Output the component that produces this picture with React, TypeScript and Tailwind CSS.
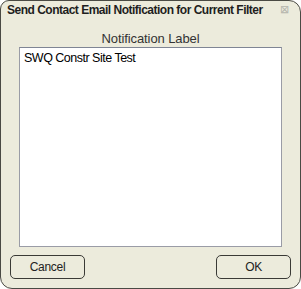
import React from 'react';

export default function App() {
    return (
        <div
            className="w-[301px] h-[289px] bg-[#ecebdc] border border-[#4a4a44] rounded-tl-[9px] rounded-tr-[12px] rounded-bl-[12px] rounded-br-[12px] flex flex-col text-[#222] overflow-hidden"
            style={{ fontFamily: '"Liberation Sans", Arial, sans-serif' }}
        >
            {/* title bar */}
            <div className="flex items-center h-[17px] pl-[6px] pr-[11px]">
                <span className="font-bold text-[12px] tracking-[-0.5px] leading-none text-[#1e1e1e] whitespace-nowrap">
                    Send Contact Email Notification for Current Filter
                </span>
                <span className="ml-auto text-[11px] leading-none text-[#b4b4ac]">⊠</span>
            </div>

            <div className="flex flex-col items-center mt-[13px]">
                <div className="text-[13px] leading-[15px] text-[#333] tracking-[-0.1px]">Notification Label</div>
                <div className="mt-[1px] w-[263px] h-[200px] bg-white border border-[#9a9ca6] border-t-[#7f8594] px-[4px] pt-[3px] text-[12.5px] leading-[14px] text-black tracking-[-0.5px]">
                    SWQ Constr Site Test
                </div>
            </div>

            <div className="flex justify-between px-[9px] mt-[8px]">
                <button className="w-[75px] h-[24px] rounded-[5px] border border-[#3a3a36] bg-[#ecebdc] text-[12px] tracking-[-0.3px] text-[#222]">
                    Cancel
                </button>
                <button className="w-[75px] h-[24px] rounded-[5px] border border-[#3a3a36] bg-[#ecebdc] text-[12px] tracking-[-0.3px] text-[#222]">
                    OK
                </button>
            </div>
        </div>
    );
}
